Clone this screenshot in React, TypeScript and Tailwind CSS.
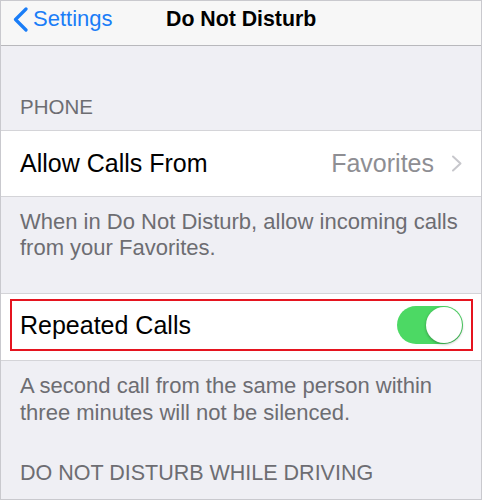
import React from "react";

export default function App() {
  return (
    <div
      className="w-[482px] h-[500px] overflow-hidden bg-[#efeff4] border border-[#c9c9ce] flex flex-col"
      style={{ fontFamily: '"Liberation Sans", Arial, sans-serif' }}
    >
      {/* Nav bar */}
      <div className="h-[45px] shrink-0 bg-[#f7f7f7] border-b border-[#b8b8bc] flex items-center pb-[8px] relative">
        <div className="flex items-center pl-[11px] text-[#1a7df7]">
          <svg width="17" height="25" viewBox="0 0 17 25" className="mr-[4px]">
            <path d="M14 2 L3.5 12.5 L14 23" fill="none" stroke="#1a7df7" strokeWidth="3.2" strokeLinecap="round" strokeLinejoin="round" />
          </svg>
          <span className="text-[22px] leading-none">Settings</span>
        </div>
        <div className="absolute left-[165px] top-0 h-[37px] flex items-center">
          <span className="text-[21.3px] font-bold text-black leading-none">Do Not Disturb</span>
        </div>
      </div>

      {/* PHONE header */}
      <div className="h-[84px] shrink-0 flex items-end pl-[19px] pb-[11px]">
        <span className="text-[20.5px] leading-[24px] text-[#6d6d72]">PHONE</span>
      </div>

      {/* Allow Calls From row */}
      <div className="shrink-0 bg-white border-y border-[#d4d4d8] h-[67px] flex items-center pl-[19px] pr-[18px]">
        <span className="text-[25px] text-black leading-none">Allow Calls From</span>
        <span className="ml-auto text-[25px] text-[#8e8e93] leading-none">Favorites</span>
        <svg width="12" height="17" viewBox="0 0 12 17" className="ml-[17px]">
          <path d="M2 1.5 L9.5 8.5 L2 15.5" fill="none" stroke="#c7c7cc" strokeWidth="2" strokeLinecap="round" strokeLinejoin="round" />
        </svg>
      </div>

      {/* Footer 1 */}
      <div className="shrink-0 pl-[19px] pr-[20px] pt-[12px] pb-[32px]">
        <p className="text-[22px] leading-[26px] text-[#6d6d72]">
          When in Do Not Disturb, allow incoming calls from your Favorites.
        </p>
      </div>

      {/* Repeated Calls row */}
      <div className="shrink-0 bg-white border-y border-[#d4d4d8] h-[68px] pl-[9px] pr-[8px] pt-[5px] pb-[9px]">
        <div className="h-full border-2 border-[#e5141f] flex items-center pl-[8px] pr-[8px]">
          <span className="text-[25px] text-black leading-none">Repeated Calls</span>
          <div className="ml-auto w-[66px] h-[38px] rounded-full bg-[#4cd964] relative">
            <div className="absolute right-[1px] top-[1px] w-[36px] h-[36px] rounded-full bg-white shadow-[0_1px_3px_rgba(0,0,0,0.35)]" />
          </div>
        </div>
      </div>

      {/* Footer 2 */}
      <div className="shrink-0 pl-[19px] pr-[20px] pt-[11px]">
        <p className="text-[22px] leading-[27px] text-[#6d6d72]">
          A second call from the same person within three minutes will not be silenced.
        </p>
      </div>

      {/* Driving header */}
      <div className="shrink-0 pl-[19px] pt-[35px]">
        <span className="text-[21.5px] leading-[24px] text-[#6d6d72]">DO NOT DISTURB WHILE DRIVING</span>
      </div>
    </div>
  );
}
